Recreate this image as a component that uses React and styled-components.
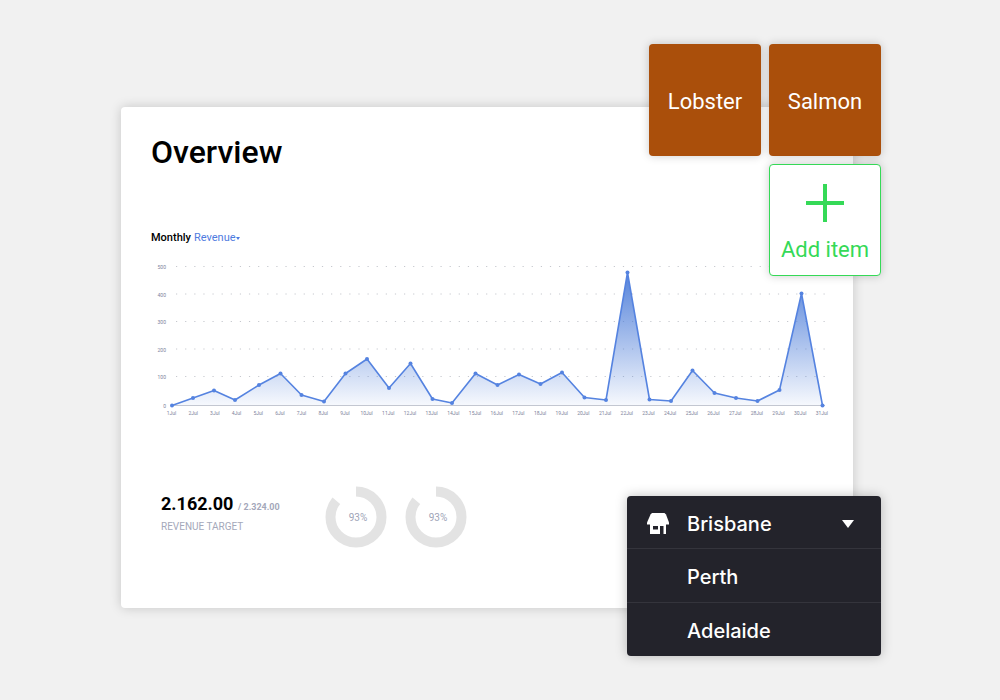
import React, { useState } from "react";
import styled, { createGlobalStyle } from "styled-components";

const GlobalStyle = createGlobalStyle`
  * {
    box-sizing: border-box;
  }

  body {
    margin: 0;
    background-color: #f1f1f1;
    font-family: Roboto, "Liberation Sans", sans-serif;
  }

  button,
  select {
    font-family: inherit;
    cursor: pointer;
  }
`;

const Page = styled.main`
  min-height: 100vh;
  padding: 107px 147px 92px 121px;
`;

const Board = styled.div`
  position: relative;
`;

const Card = styled.section`
  display: flex;
  flex-direction: column;
  padding: 25px 20px 60px 30px;
  border-radius: 4px;
  background-color: #fff;
  box-shadow: 0 0 12px rgba(0, 0, 0, 0.18);
`;

const Title = styled.h1`
  margin: 0;
  color: #000;
  font-size: 32px;
  font-weight: 500;
  line-height: 40px;
`;

const ChartHeading = styled.div`
  display: flex;
  align-items: center;
  gap: 3px;
  margin-top: 58px;
  font-size: 11px;
  line-height: 16px;
`;

const ChartLabel = styled.label`
  color: #000;
  font-weight: 500;
`;

const MetricPicker = styled.span`
  display: flex;
  align-items: center;
  color: #4f7be0;
`;

const MetricSelect = styled.select`
  appearance: none;
  padding: 0;
  border: 0;
  background: none;
  color: inherit;
  font-size: 11px;
  line-height: 16px;
`;

const ChartSvg = styled.svg`
  display: block;
  width: 100%;
  height: auto;
  margin-top: 7px;
`;

const AxisText = styled.text`
  fill: #7d839b;
  font-size: 5px;
`;

const Stats = styled.div`
  display: flex;
  flex-wrap: wrap;
  gap: 18px;
  margin-top: 63px;
  padding-left: 10px;
`;

const Target = styled.div`
  width: 146px;
  padding-top: 6px;
`;

const TargetValue = styled.div`
  color: #000;
  font-size: 18px;
  font-weight: 700;
  line-height: 24px;
  white-space: nowrap;

  small {
    color: #a4a8ba;
    font-size: 9px;
    font-weight: 700;
  }
`;

const TargetCaption = styled.div`
  color: #a4a8ba;
  font-size: 10px;
  line-height: 16px;
`;

const DonutSvg = styled.svg`
  display: block;
  width: 62px;
  height: 62px;

  text {
    fill: #a0a4b8;
    font-size: 10px;
  }
`;

const Tiles = styled.div`
  position: absolute;
  top: -63px;
  right: -28px;
  display: grid;
  grid-template-columns: repeat(2, 112px);
  grid-auto-rows: 112px;
  gap: 8px;
`;

const Tile = styled.button`
  padding: 4px 0 0;
  border: 0;
  border-radius: 4px;
  background-color: #aa4f0b;
  color: #fff;
  font-size: 22px;
  line-height: 28px;
  box-shadow: 0 0 10px rgba(0, 0, 0, 0.2);
`;

const AddTile = styled(Tile)`
  grid-column: 2;
  display: flex;
  flex-direction: column;
  align-items: center;
  justify-content: center;
  gap: 14px;
  padding-top: 8px;
  border: 1px solid #35d957;
  background-color: #fff;
  color: #35d957;
`;

const Menu = styled.div`
  position: absolute;
  right: -28px;
  bottom: -48px;
  width: 254px;
  overflow: hidden;
  border-radius: 4px;
  background-color: #23232b;
  box-shadow: 0 0 12px rgba(0, 0, 0, 0.25);
`;

const MenuButton = styled.button`
  display: grid;
  grid-template-columns: 22px 1fr 14px;
  column-gap: 18px;
  align-items: center;
  width: 100%;
  height: ${(props) => (props.$head ? "52px" : "54px")};
  padding: ${(props) => (props.$head ? "4px" : "2px")} 26px 0 20px;
  border: 0;
  border-top: ${(props) => (props.$head ? "0" : "1px solid #34343c")};
  background: none;
  color: #fff;
  font-family: Inter, Roboto, sans-serif;
  font-size: 20px;
  font-weight: 500;
  line-height: 28px;
  text-align: left;
`;

const MenuText = styled.span`
  grid-column: 2;
`;

// chart coordinates, one entry per day of July
const days = [
  [21, 152.5], [42, 145], [63, 137.5], [84, 147], [108, 132], [129.5, 120.5],
  [150.5, 142], [173, 148.5], [194.5, 120.5], [216, 106], [238, 135],
  [259.5, 110.5], [281.5, 146], [301, 150], [324.5, 120.5], [346.5, 132],
  [368, 121.5], [389.5, 131], [411, 119.5], [433.5, 144.5], [455, 147],
  [476.5, 19.5], [498.5, 146.5], [520, 148], [541.5, 117.5], [563.5, 140],
  [585, 145], [606.5, 148], [628.5, 137], [650.5, 40.5], [671.5, 152.5],
];

const gridLines = [
  { label: "500", y: 14 },
  { label: "400", y: 41.5 },
  { label: "300", y: 69 },
  { label: "200", y: 96.5 },
  { label: "100", y: 124 },
];

function RevenueChart() {
  const line = days.map((p) => p.join(",")).join(" ");

  return (
    <ChartSvg viewBox="0 0 682 170" role="img" aria-label="Monthly revenue">
      <defs>
        <linearGradient
          id="revenueFill"
          gradientUnits="userSpaceOnUse"
          x1="0"
          y1="19"
          x2="0"
          y2="152"
        >
          <stop offset="0" stopColor="#4a7bd8" stopOpacity="0.95" />
          <stop offset="0.5" stopColor="#4a7bd8" stopOpacity="0.5" />
          <stop offset="1" stopColor="#4a7bd8" stopOpacity="0.05" />
        </linearGradient>
      </defs>
      {gridLines.map((g) => (
        <g key={g.label}>
          <AxisText x="15" y={g.y + 2} textAnchor="end">
            {g.label}
          </AxisText>
          <line
            x1="25"
            x2="677"
            y1={g.y - 0.5}
            y2={g.y - 0.5}
            stroke="#c6c8ce"
            strokeDasharray="1.2 7.92"
          />
        </g>
      ))}
      <AxisText x="15" y="154.5" textAnchor="end">
        0
      </AxisText>
      <polygon points={`${line} 21,152.5`} fill="url(#revenueFill)" />
      <line x1="21" x2="674" y1="152.5" y2="152.5" stroke="#c3c7d1" />
      <polyline
        points={line}
        fill="none"
        stroke="#5583e0"
        strokeWidth="1.6"
        strokeLinejoin="round"
      />
      {days.map(([x, y], index) => (
        <g key={index}>
          <circle cx={x} cy={y} r="2" fill="#5583e0" />
          <AxisText x={20.5 + index * 21.68} y="162" textAnchor="middle">
            {index + 1}Jul
          </AxisText>
        </g>
      ))}
    </ChartSvg>
  );
}

function Donut({ value }) {
  return (
    <DonutSvg viewBox="0 0 62 62" role="img" aria-label={`${value}%`}>
      <circle
        cx="31"
        cy="31"
        r="25.5"
        fill="none"
        stroke="#e3e3e3"
        strokeWidth="10"
        pathLength="100"
        strokeDasharray="86 14"
        transform="rotate(-90 31 31)"
      />
      <text x="33" y="35" textAnchor="middle">
        {value}%
      </text>
    </DonutSvg>
  );
}

function StoreIcon() {
  return (
    <svg width="22" height="22" viewBox="0 0 22 22" fill="#fff" aria-hidden="true">
      <path d="M5 0h12.500l1.500 1.500L22 9.500v2H0v-2l3.500-8z" />
      <path
        fillRule="evenodd"
        d="M3 11h16v10h-2.500v-8H13v8H3zM6 13v3.500h5V13z"
      />
    </svg>
  );
}

function LocationMenu() {
  const [open, setOpen] = useState(true);
  const [current, setCurrent] = useState("Brisbane");
  const places = ["Brisbane", "Perth", "Adelaide"];

  return (
    <Menu>
      <MenuButton $head aria-expanded={open} onClick={() => setOpen(!open)}>
        <StoreIcon />
        <MenuText>{current}</MenuText>
        <svg width="14" height="8" viewBox="0 0 14 8" fill="#fff" aria-hidden="true">
          <path d="M1 0h12L7 8z" />
        </svg>
      </MenuButton>
      {open &&
        places
          .filter((place) => place !== current)
          .map((place) => (
            <MenuButton key={place} onClick={() => setCurrent(place)}>
              <MenuText>{place}</MenuText>
            </MenuButton>
          ))}
    </Menu>
  );
}

function App() {
  return (
    <Page>
      <GlobalStyle />
      <Board>
        <Card>
          <Title>Overview</Title>
          <ChartHeading>
            <ChartLabel htmlFor="metric">Monthly</ChartLabel>
            <MetricPicker>
              <MetricSelect id="metric">
                <option>Revenue</option>
              </MetricSelect>
              <svg width="4" height="3" viewBox="0 0 4 3" fill="currentColor" aria-hidden="true">
                <path d="M0 0h4L2 3z" />
              </svg>
            </MetricPicker>
          </ChartHeading>
          <RevenueChart />
          <Stats>
            <Target>
              <TargetValue>
                2.162.00 <small>/ 2.324.00</small>
              </TargetValue>
              <TargetCaption>REVENUE TARGET</TargetCaption>
            </Target>
            <Donut value={93} />
            <Donut value={93} />
          </Stats>
        </Card>
        <Tiles>
          <Tile>Lobster</Tile>
          <Tile>Salmon</Tile>
          <AddTile>
            <svg width="38" height="38" viewBox="0 0 38 38" aria-hidden="true">
              <path d="M19 0v38M0 19h38" stroke="currentColor" strokeWidth="4" />
            </svg>
            Add item
          </AddTile>
        </Tiles>
        <LocationMenu />
      </Board>
    </Page>
  );
}

export default App;
